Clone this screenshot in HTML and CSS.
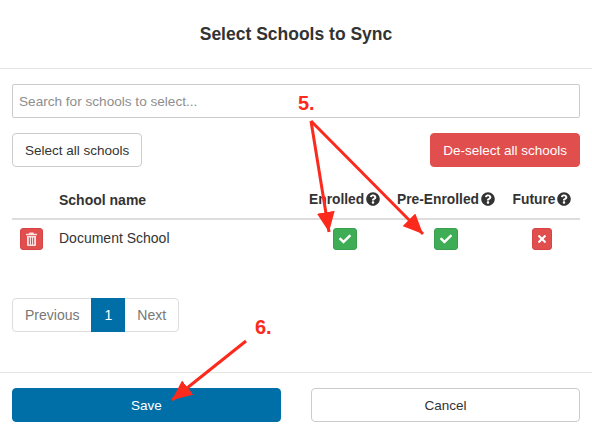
FILE: index.html
```html
<!DOCTYPE html>
<html lang="en">
<head>
    <meta charset="UTF-8">
    <title>Select Schools to Sync</title>
    <link rel="stylesheet" href="styles.css">
</head>
<body>
    <svg class="defs" width="0" height="0">
        <symbol id="i-help" viewBox="0 0 512 512"><path d="M504 256c0 136.997-111.043 248-248 248S8 392.997 8 256C8 119.083 119.043 8 256 8s248 111.083 248 248zM262.655 90c-54.497 0-89.255 22.957-116.549 63.758-3.536 5.286-2.353 12.415 2.715 16.258l34.699 26.31c5.205 3.947 12.621 3.008 16.665-2.122 17.864-22.658 30.113-35.797 57.303-35.797 20.429 0 45.698 13.148 45.698 32.958 0 14.976-12.363 22.667-32.534 33.976C247.128 238.528 216 254.941 216 296v4c0 6.627 5.373 12 12 12h56c6.627 0 12-5.373 12-12v-1.333c0-28.462 83.186-29.647 83.186-106.667 0-58.002-60.165-102-116.531-102zM256 338c-25.365 0-46 20.635-46 46 0 25.364 20.635 46 46 46s46-20.636 46-46c0-25.365-20.635-46-46-46z"/></symbol>
        <symbol id="i-check" viewBox="0 0 512 512"><path d="M173.898 439.404l-166.4-166.4c-9.997-9.997-9.997-26.206 0-36.204l36.203-36.204c9.997-9.998 26.207-9.998 36.204 0L192 312.69 432.095 72.596c9.997-9.997 26.207-9.997 36.204 0l36.203 36.204c9.997 9.997 9.997 26.206 0 36.204l-294.4 294.401c-9.998 9.997-26.207 9.997-36.204-.001z"/></symbol>
        <symbol id="i-times" viewBox="0 0 352 512"><path d="M242.72 256l100.07-100.07c12.28-12.28 12.28-32.19 0-44.48l-22.24-22.24c-12.28-12.28-32.19-12.28-44.48 0L176 189.28 75.93 89.21c-12.28-12.28-32.19-12.28-44.48 0L9.21 111.45c-12.28 12.28-12.28 32.19 0 44.48L109.28 256 9.21 356.07c-12.28 12.28-12.28 32.19 0 44.48l22.24 22.24c12.28 12.28 32.2 12.28 44.48 0L176 322.72l100.07 100.07c12.28 12.28 32.2 12.28 44.48 0l22.24-22.24c12.28-12.28 12.28-32.19 0-44.48L242.72 256z"/></symbol>
        <symbol id="i-trash" viewBox="0 0 11 14"><path d="M3.6 0.5h3.8l.7 1.3H11v1.4H0V1.8h2.9zM1 4h9v9a1 1 0 0 1-1 1H2a1 1 0 0 1-1-1zM2.8 5.6v6.8h1.1V5.6zM4.95 5.6v6.8h1.1V5.6zM7.1 5.6v6.8h1.1V5.6z" fill-rule="evenodd"/></symbol>
    </svg>

    <div id="modal">
        <div class="modal-head">Select Schools to Sync</div>

        <div class="modal-body">
            <input class="search" type="text" placeholder="Search for schools to select...">

            <div class="bulk">
                <button class="btn">Select all schools</button>
                <button class="btn btn-red">De-select all schools</button>
            </div>

            <table class="schools">
                <thead>
                    <tr>
                        <th class="col-del"></th>
                        <th>School name</th>
                        <th class="col-enrolled mid">Enrolled<svg class="help"><use href="#i-help"/></svg></th>
                        <th class="col-pre mid">Pre-Enrolled<svg class="help"><use href="#i-help"/></svg></th>
                        <th class="col-future mid">Future<svg class="help"><use href="#i-help"/></svg></th>
                    </tr>
                </thead>
                <tbody>
                    <tr>
                        <td><span class="tag tag-red tag-del"><svg class="ico-trash"><use href="#i-trash"/></svg></span></td>
                        <td>Document School</td>
                        <td class="mid"><span class="tag tag-green"><svg class="ico-check"><use href="#i-check"/></svg></span></td>
                        <td class="mid"><span class="tag tag-green"><svg class="ico-check"><use href="#i-check"/></svg></span></td>
                        <td class="mid"><span class="tag tag-red"><svg class="ico-times"><use href="#i-times"/></svg></span></td>
                    </tr>
                </tbody>
            </table>

            <ul class="pager">
                <li>Previous</li>
                <li class="on">1</li>
                <li>Next</li>
            </ul>
        </div>

        <div class="modal-foot">
            <button class="btn btn-blue">Save</button>
            <button class="btn">Cancel</button>
        </div>
    </div>

    <!-- red notes drawn on top of the screen -->
    <svg class="notes" width="592" height="436" viewBox="0 0 592 436">
        <defs>
            <marker id="head" markerUnits="userSpaceOnUse" markerWidth="22" markerHeight="18" refX="20" refY="9" orient="auto">
                <path d="M0 0L20 9L0 18z" fill="#fb2a1c"/>
            </marker>
        </defs>
        <text class="note" x="298" y="110">5.</text>
        <text class="note" x="255" y="334">6.</text>
        <line x1="311" y1="121" x2="329" y2="232" marker-end="url(#head)"/>
        <line x1="311" y1="121" x2="423" y2="234" marker-end="url(#head)"/>
        <line x1="246" y1="341" x2="172" y2="400" marker-end="url(#head)"/>
    </svg>
</body>
</html>
```

FILE: styles.css
```css
*{
    margin: 0;
    padding: 0;
    box-sizing: border-box;
}
html,body{
    background: #fff;
}
body{
    width: 592px;
    height: 436px;
    position: relative;
    overflow: hidden;
    font-family: "Liberation Sans", Arial, sans-serif;
    font-size: 14px;
    color: #333;
}
.defs{
    position: absolute;
}

.modal-head{
    height: 69px;
    line-height: 68px;
    border-bottom: 1px solid #e5e5e5;
    text-align: center;
    font-size: 17.5px;
    font-weight: bold;
}
.modal-body{
    height: 303px;
    padding: 15px 12px 0;
}
.search{
    display: block;
    width: 100%;
    height: 34px;
    padding: 0 6px;
    border: 1px solid #ccc;
    border-radius: 2px;
    font: inherit;
    font-size: 13.6px;
    outline: none;
}
.search::placeholder{
    color: #8e8e8e;
    opacity: 1;
}
.bulk{
    display: flex;
    justify-content: space-between;
    margin-top: 15px;
}
.btn{
    height: 34px;
    padding: 0 12px;
    border: 1px solid #ccc;
    border-radius: 4px;
    background: #fff;
    color: #333;
    font: inherit;
    font-size: 13.5px;
}
.btn-red{
    background: #e04e4e;
    border-color: #e04e4e;
    color: #fff;
}
.btn-blue{
    background: #006fa8;
    border-color: #006fa8;
    color: #fff;
}

.schools{
    width: 100%;
    border-collapse: collapse;
    table-layout: fixed;
}
.schools th{
    height: 52px;
    padding: 0 8px 8px;
    border-bottom: 2px solid #ddd;
    text-align: left;
    vertical-align: bottom;
    line-height: 20px;
    white-space: nowrap;
}
.schools td{
    padding: 8px;
    vertical-align: top;
    line-height: 20px;
}
.schools .mid{
    text-align: center;
}
.schools th.mid{
    font-size: 13.8px;
}
.col-del{
    width: 39px;
}
.col-enrolled{
    width: 87px;
}
.col-pre{
    width: 116px;
}
.col-future{
    width: 76px;
}
.help{
    width: 14px;
    height: 14px;
    margin-left: 2px;
    vertical-align: -2px;
    fill: #333;
}
.tag{
    display: inline-flex;
    align-items: center;
    justify-content: center;
    width: 24px;
    height: 22px;
    border-radius: 3px;
    vertical-align: top;
    fill: #fff;
}
.tag-green{
    background: #3fad56;
    border: 1px solid #39a04f;
}
.tag-red{
    width: 20px;
    background: #e04e4e;
    border: 1px solid #d64545;
}
.tag-del{
    width: 23px;
    fill: #fbe3e3;
}
.ico-check{
    width: 12px;
    height: 12px;
}
.ico-times{
    width: 8px;
    height: 12px;
}
.ico-trash{
    width: 11px;
    height: 14px;
}

.pager{
    display: flex;
    width: 167px;
    height: 34px;
    margin-top: 40px;
    list-style: none;
    border: 1px solid #ddd;
    border-radius: 4px;
    line-height: 32px;
    color: #777;
}
.pager li{
    padding: 0 12px;
}
.pager li.on{
    margin: -1px 0;
    padding: 0 13px;
    height: 34px;
    line-height: 34px;
    background: #006fa8;
    color: #fff;
}

.modal-foot{
    display: grid;
    grid-template-columns: 1fr 1fr;
    gap: 30px;
    padding: 15px 12px;
    border-top: 1px solid #e5e5e5;
}

.notes{
    position: absolute;
    left: 0;
    top: 0;
}
.notes line{
    stroke: #fb2a1c;
    stroke-width: 3;
}
.note{
    font-family: "Liberation Sans", Arial, sans-serif;
    font-size: 20px;
    font-weight: bold;
    fill: #fb2a1c;
}
```
